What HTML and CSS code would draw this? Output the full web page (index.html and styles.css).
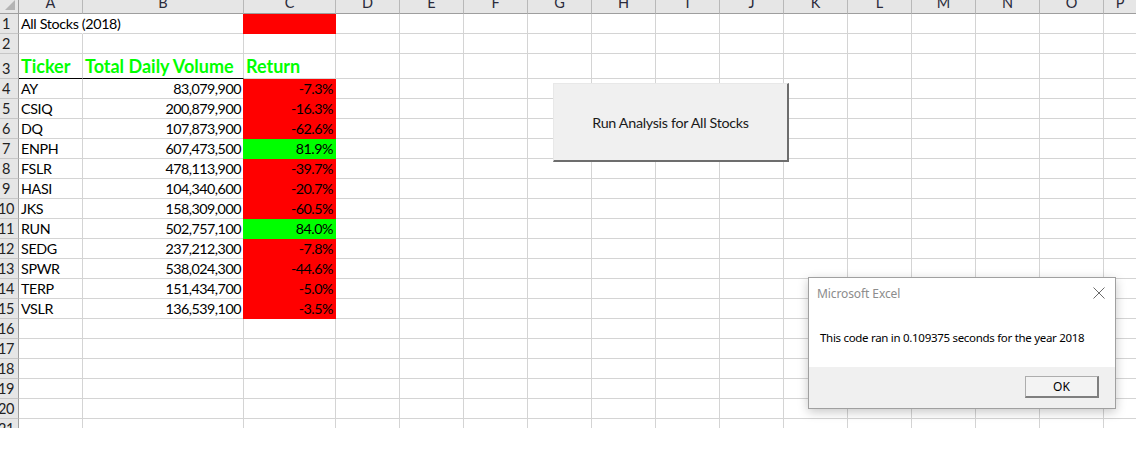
FILE: index.html
```html
<!DOCTYPE html>
<html>
<head>
<meta charset="utf-8">
<title>All Stocks (2018)</title>
<link rel="stylesheet" href="styles.css">
</head>
<body>
<div class="window">
  <div class="sheet">
    <div class="corner"><span class="tri"></span></div>
    <div class="ch">A</div><div class="ch">B</div><div class="ch">C</div><div class="ch">D</div><div class="ch">E</div><div class="ch">F</div><div class="ch">G</div><div class="ch">H</div><div class="ch">I</div><div class="ch">J</div><div class="ch">K</div><div class="ch">L</div><div class="ch">M</div><div class="ch">N</div><div class="ch">O</div><div class="ch last">P</div>

    <div class="rh"><span>1</span></div><div class="c spill">All Stocks (2018)</div><div class="c"></div><div class="c fill-red"></div><div class="rest"></div>
    <div class="rh"><span>2</span></div><div class="c"></div><div class="c"></div><div class="c"></div><div class="rest"></div>
    <div class="rh"><span>3</span></div><div class="c head underline">Ticker</div><div class="c head underline">Total Daily Volume</div><div class="c head">Return</div><div class="rest"></div>

    <div class="rh"><span>4</span></div><div class="c">AY</div><div class="c num">83,079,900</div><div class="c num fill-red">-7.3%</div><div class="rest"></div>
    <div class="rh"><span>5</span></div><div class="c">CSIQ</div><div class="c num">200,879,900</div><div class="c num fill-red">-16.3%</div><div class="rest"></div>
    <div class="rh"><span>6</span></div><div class="c">DQ</div><div class="c num">107,873,900</div><div class="c num fill-red">-62.6%</div><div class="rest"></div>
    <div class="rh"><span>7</span></div><div class="c">ENPH</div><div class="c num">607,473,500</div><div class="c num fill-green">81.9%</div><div class="rest"></div>
    <div class="rh"><span>8</span></div><div class="c">FSLR</div><div class="c num">478,113,900</div><div class="c num fill-red">-39.7%</div><div class="rest"></div>
    <div class="rh"><span>9</span></div><div class="c">HASI</div><div class="c num">104,340,600</div><div class="c num fill-red">-20.7%</div><div class="rest"></div>
    <div class="rh"><span>10</span></div><div class="c">JKS</div><div class="c num">158,309,000</div><div class="c num fill-red">-60.5%</div><div class="rest"></div>
    <div class="rh"><span>11</span></div><div class="c">RUN</div><div class="c num">502,757,100</div><div class="c num fill-green">84.0%</div><div class="rest"></div>
    <div class="rh"><span>12</span></div><div class="c">SEDG</div><div class="c num">237,212,300</div><div class="c num fill-red">-7.8%</div><div class="rest"></div>
    <div class="rh"><span>13</span></div><div class="c">SPWR</div><div class="c num">538,024,300</div><div class="c num fill-red">-44.6%</div><div class="rest"></div>
    <div class="rh"><span>14</span></div><div class="c">TERP</div><div class="c num">151,434,700</div><div class="c num fill-red">-5.0%</div><div class="rest"></div>
    <div class="rh"><span>15</span></div><div class="c">VSLR</div><div class="c num">136,539,100</div><div class="c num fill-red">-3.5%</div><div class="rest"></div>

    <div class="rh"><span>16</span></div><div class="c"></div><div class="c"></div><div class="c"></div><div class="rest"></div>
    <div class="rh"><span>17</span></div><div class="c"></div><div class="c"></div><div class="c"></div><div class="rest"></div>
    <div class="rh"><span>18</span></div><div class="c"></div><div class="c"></div><div class="c"></div><div class="rest"></div>
    <div class="rh"><span>19</span></div><div class="c"></div><div class="c"></div><div class="c"></div><div class="rest"></div>
    <div class="rh"><span>20</span></div><div class="c"></div><div class="c"></div><div class="c"></div><div class="rest"></div>
    <div class="rh"><span>21</span></div><div class="c"></div><div class="c"></div><div class="c"></div><div class="rest"></div>
  </div>

  <button class="macro-btn" type="button">Run Analysis for All Stocks</button>

  <div class="msgbox">
    <div class="msg-title">
      <span class="msg-caption">Microsoft Excel</span>
      <svg class="msg-close" width="12" height="12" viewBox="0 0 12 12"><path d="M0.5 0.5 L11.5 11.5 M11.5 0.5 L0.5 11.5" stroke="#6b6b6b" stroke-width="1" fill="none"/></svg>
    </div>
    <div class="msg-body">This code ran in 0.109375 seconds for the year 2018</div>
    <div class="msg-foot"><button class="msg-ok" type="button">OK</button></div>
  </div>
</div>
</body>
</html>
```

FILE: styles.css
```css
* { box-sizing: border-box; }

html, body {
  margin: 0;
  padding: 0;
  background: #ffffff;
}

.window {
  position: relative;
  width: 1136px;
  height: 460px;
  overflow: hidden;
  font-family: Lato, "Liberation Sans", sans-serif;
  color: #000;
}

.sheet {
  display: grid;
  grid-template-columns: 19px 64px 161px 92px repeat(12, 64px) 1fr;
  grid-template-rows: 14px 20px 20px 25px repeat(18, 20px);
  height: 428px;
  overflow: hidden;
}

/* headers */
.corner {
  background: #e6e6e6;
  border-right: 1px solid #9e9e9e;
  border-bottom: 1px solid #9e9e9e;
  display: flex;
  align-items: flex-end;
  justify-content: flex-end;
  padding: 0 3px 3px 0;
}
.tri {
  width: 0;
  height: 0;
  border-left: 10px solid transparent;
  border-bottom: 10px solid #b4b4b4;
}

.ch {
  background: #e6e6e6;
  border-right: 1px solid #b8b8b8;
  border-bottom: 1px solid #9e9e9e;
  font-size: 14.5px;
  line-height: 5px;
  text-align: center;
  color: #2b2b3b;
  overflow: hidden;
}
.ch.last { border-right: none; }

.rh {
  grid-column: 1;
  background: #e6e6e6;
  border-right: 1px solid #9e9e9e;
  border-bottom: 1px solid #c6c6c6;
  display: flex;
  justify-content: center;
  align-items: flex-end;
  padding: 0 6px 1px 0;
  font-size: 14.5px;
  line-height: 17px;
  letter-spacing: -0.3px;
  color: #222;
  overflow: visible;
  white-space: nowrap;
}

/* cells */
.c {
  border-right: 1px solid #d4d4d4;
  border-bottom: 1px solid #d4d4d4;
  display: flex;
  align-items: flex-end;
  padding: 0 2px 1px 2px;
  font-size: 14.3px;
  line-height: 17px;
  letter-spacing: -0.35px;
  white-space: nowrap;
  overflow: visible;
}
.c.num {
  justify-content: flex-end;
  padding-right: 2px;
  letter-spacing: -0.5px;
}
.c.spill { border-right-color: #fff; }

.c.head {
  font-weight: 700;
  font-size: 18px;
  line-height: 22px;
  letter-spacing: 0;
  color: #00ff00;
}
.c.underline { border-bottom-color: #000; }

.fill-red {
  background: #ff0000;
  border-right-color: #ff0000;
  border-bottom-color: #ff0000;
  box-shadow: -1px 0 0 #ff0000;
}
.fill-green {
  background: #00ff00;
  border-right-color: #00ff00;
  border-bottom-color: #00ff00;
  box-shadow: -1px 0 0 #00ff00;
}

.rest {
  grid-column: 5 / -1;
  border-bottom: 1px solid #d4d4d4;
  background-image: repeating-linear-gradient(to right, transparent 0, transparent 63px, #d4d4d4 63px, #d4d4d4 64px);
}

/* floating macro button */
.macro-btn {
  position: absolute;
  left: 553px;
  top: 83px;
  width: 236px;
  height: 79px;
  margin: 0;
  padding: 0;
  background: #f0f0f0;
  border-top: 1px solid #e8e8e8;
  border-left: 1px solid #e8e8e8;
  border-right: 2px solid #6d6d6d;
  border-bottom: 2px solid #6d6d6d;
  font-family: Lato, "Liberation Sans", sans-serif;
  font-size: 14.3px;
  letter-spacing: -0.3px;
  color: #1a1a1a;
}

/* message box */
.msgbox {
  position: absolute;
  left: 808px;
  top: 277px;
  width: 308px;
  height: 132px;
  background: #fff;
  border: 1px solid #a0a0a0;
  box-shadow: 0 3px 10px rgba(0, 0, 0, 0.22);
  display: flex;
  flex-direction: column;
  font-family: "Noto Sans", "Open Sans", sans-serif;
}
.msg-title {
  height: 30px;
  display: flex;
  align-items: center;
  justify-content: space-between;
  padding: 0 10px 0 8px;
}
.msg-caption {
  font-size: 12px;
  letter-spacing: -0.1px;
  color: #8c8c8c;
}
.msg-body {
  flex: 1;
  padding: 22px 0 0 11px;
  font-size: 11.5px;
  line-height: 16px;
  letter-spacing: -0.3px;
  color: #000;
}
.msg-foot {
  height: 41px;
  background: #f0f0f0;
  display: flex;
  justify-content: flex-end;
  align-items: flex-start;
  padding: 9px 16px 0 0;
}
.msg-ok {
  width: 74px;
  height: 22px;
  margin: 0;
  padding: 0;
  background: #f3f3f3;
  border-top: 1px solid #adadad;
  border-left: 1px solid #adadad;
  border-right: 2px solid #7f7f7f;
  border-bottom: 2px solid #7f7f7f;
  font-family: "Noto Sans", "Open Sans", sans-serif;
  font-size: 12px;
  color: #000;
}
```
